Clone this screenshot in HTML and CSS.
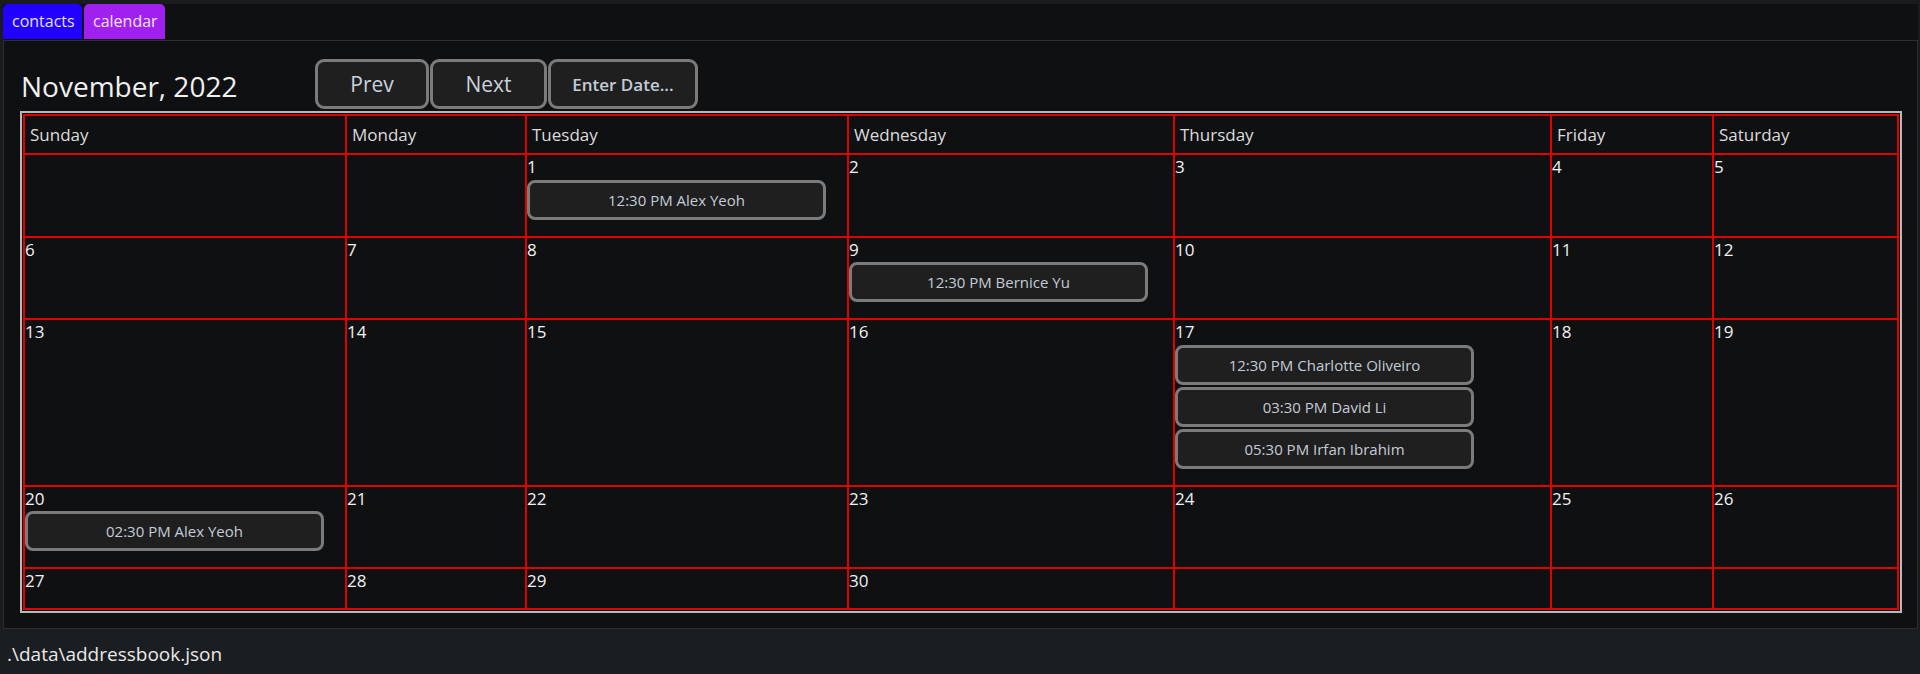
FILE: index.html
```html
<!DOCTYPE html>
<html>
<head>
<meta charset="utf-8">
<link rel="stylesheet" href="styles.css">
</head>
<body>
<div class="main">
  <div class="tabs">
    <div class="tab tab-contacts">contacts</div>
    <div class="tab tab-calendar">calendar</div>
  </div>
  <div class="pane">
    <div class="toolbar">
      <div class="month-title">November, 2022</div>
      <button class="nav-btn btn-prev">Prev</button>
      <button class="nav-btn btn-next">Next</button>
      <button class="nav-btn btn-date">Enter Date...</button>
    </div>
    <div class="cal-frame">
      <div class="calendar">
        <div class="head">Sunday</div>
        <div class="head">Monday</div>
        <div class="head">Tuesday</div>
        <div class="head">Wednesday</div>
        <div class="head">Thursday</div>
        <div class="head">Friday</div>
        <div class="head">Saturday</div>

        <div class="cell"></div>
        <div class="cell"></div>
        <div class="cell"><div class="num">1</div><div class="event">12:30 PM Alex Yeoh</div></div>
        <div class="cell"><div class="num">2</div></div>
        <div class="cell"><div class="num">3</div></div>
        <div class="cell"><div class="num">4</div></div>
        <div class="cell"><div class="num">5</div></div>

        <div class="cell"><div class="num">6</div></div>
        <div class="cell"><div class="num">7</div></div>
        <div class="cell"><div class="num">8</div></div>
        <div class="cell"><div class="num">9</div><div class="event">12:30 PM Bernice Yu</div></div>
        <div class="cell"><div class="num">10</div></div>
        <div class="cell"><div class="num">11</div></div>
        <div class="cell"><div class="num">12</div></div>

        <div class="cell"><div class="num">13</div></div>
        <div class="cell"><div class="num">14</div></div>
        <div class="cell"><div class="num">15</div></div>
        <div class="cell"><div class="num">16</div></div>
        <div class="cell"><div class="num">17</div><div class="event">12:30 PM Charlotte Oliveiro</div><div class="event">03:30 PM David Li</div><div class="event">05:30 PM Irfan Ibrahim</div></div>
        <div class="cell"><div class="num">18</div></div>
        <div class="cell"><div class="num">19</div></div>

        <div class="cell"><div class="num">20</div><div class="event">02:30 PM Alex Yeoh</div></div>
        <div class="cell"><div class="num">21</div></div>
        <div class="cell"><div class="num">22</div></div>
        <div class="cell"><div class="num">23</div></div>
        <div class="cell"><div class="num">24</div></div>
        <div class="cell"><div class="num">25</div></div>
        <div class="cell"><div class="num">26</div></div>

        <div class="cell"><div class="num">27</div></div>
        <div class="cell"><div class="num">28</div></div>
        <div class="cell"><div class="num">29</div></div>
        <div class="cell"><div class="num">30</div></div>
        <div class="cell"></div>
        <div class="cell"></div>
        <div class="cell"></div>
      </div>
    </div>
  </div>
</div>
<div class="status">.\data\addressbook.json</div>
</body>
</html>
```
FILE: styles.css
```css
* { box-sizing: border-box; }

html, body {
  margin: 0;
  padding: 0;
}

body {
  width: 1920px;
  height: 674px;
  background: #1b1e21;
  font-family: "Open Sans", "Noto Sans", sans-serif;
  display: flex;
  flex-direction: column;
  overflow: hidden;
}

.main {
  height: 629px;
  flex: none;
  background: #1a1b1d;
  padding: 4px 2px 0 3px;
  display: flex;
  flex-direction: column;
}

.tabs {
  display: flex;
  gap: 2px;
  height: 36px;
  background: #0f1012;
  padding-bottom: 1px;
}

.tab {
  height: 35px;
  padding: 0 9px;
  border-radius: 5px 5px 0 0;
  font-size: 16px;
  line-height: 35px;
  color: #e4e2ff;
}

.tab-contacts {
  background: #2200ff;
  width: 79px;
}

.tab-calendar {
  background: #a020f0;
  width: 81px;
  color: #f2e4ff;
}

.pane {
  flex: 1;
  background: #0f1012;
  border: 1px solid #2c2d2f;
  padding: 18px 16px 0 16px;
}

.toolbar {
  display: flex;
  align-items: stretch;
  height: 50px;
  margin-bottom: 2px;
}

.month-title {
  width: 295px;
  align-self: flex-end;
  margin-bottom: 4px;
  font-size: 28px;
  color: #f0f0f0;
  padding-left: 1px;
}

.nav-btn {
  height: 50px;
  margin-right: 1px;
  background: #1f1f20;
  border: 3px solid #7b7b7b;
  border-radius: 9px;
  color: #c9d3dd;
  font-family: "Open Sans", "Noto Sans", sans-serif;
  font-size: 21px;
  padding: 0;
}

.btn-prev { width: 114px; }
.btn-next { width: 117px; }
.btn-date {
  width: 150px;
  font-size: 17px;
  font-weight: 600;
  color: #c3cdd7;
}

.cal-frame {
  align-self: flex-start;
  display: inline-block;
  border: 2px solid #b9b9b9;
  padding: 1px;
}

.calendar {
  display: grid;
  grid-template-columns: 320px 178px 320px 324px 375px 160px 183px;
  gap: 2px;
  padding: 2px;
  background: #e00000;
}

.head {
  height: 37px;
  background: #0f1012;
  color: #dcdcdc;
  font-size: 17px;
  padding-left: 5px;
  display: flex;
  align-items: center;
}

.cell {
  background: #0f1012;
  padding-bottom: 14px;
  min-height: 38px;
}

.num {
  height: 24.5px;
  font-size: 17px;
  line-height: 24px;
  color: #f2f2f2;
}

.event {
  width: 299px;
  height: 40px;
  margin-bottom: 2px;
  background: #1f1f20;
  border: 3px solid #7b7b7b;
  border-radius: 8px;
  color: #c3ccd6;
  font-size: 15px;
  display: flex;
  align-items: center;
  justify-content: center;
}

.status {
  height: 45px;
  flex: none;
  padding: 6px 0 0 7px;
  font-size: 19px;
  line-height: 39px;
  color: #e8e8e8;
  background: #1b1e21;
}
```
